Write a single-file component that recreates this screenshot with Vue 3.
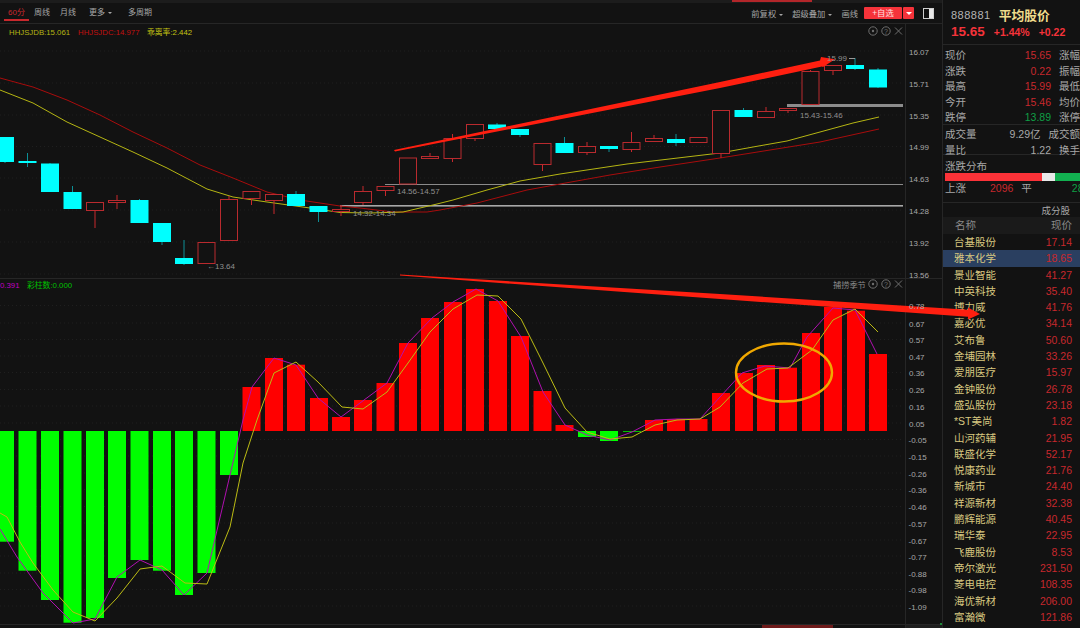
<template>
  <div class="app">
    <div class="main">
      <div class="top-strip"><i></i></div>
      <div class="toolbar">
        <div class="periods">
          <span class="tab active">60分</span>
          <span class="tab">周线</span>
          <span class="tab">月线</span>
          <span class="tab more">更多<i class="caret"></i></span>
          <span class="tab multi">多周期</span>
        </div>
        <div class="tools">
          <span class="tool">前复权<i class="caret"></i></span>
          <span class="tool">超级叠加<i class="caret"></i></span>
          <span class="tool">画线</span>
          <div class="add-group">
            <button class="btn-add">+自选</button>
            <button class="btn-drop"><i class="caret-white"></i></button>
          </div>
          <div class="layout-icon"><span></span></div>
        </div>
      </div>

      <svg class="chart" width="942" height="604" viewBox="0 24 942 604">
        <g class="grid">
          <line v-for="y in priceTicks" :key="'g' + y.label" x1="0" x2="904" :y1="y.y" :y2="y.y" />
          <line v-for="y in subTicks" :key="'s' + y.label" x1="0" x2="904" :y1="y.y" :y2="y.y" />
        </g>

        <line x1="905.5" y1="24" x2="905.5" y2="628" stroke="#262626" />
        <line x1="0" y1="278.5" x2="942" y2="278.5" stroke="#262626" />
        <line x1="0" y1="624.5" x2="942" y2="624.5" stroke="#262626" />

        <!-- support lines -->
        <rect x="787" y="104" width="116" height="3" fill="#8c8c8c" />
        <rect x="385" y="184" width="518" height="1" fill="#8a8a8a" />
        <rect x="340" y="205" width="563" height="1.6" fill="#a8a8a8" />

        <polyline class="ma" stroke="#a80c0c" :points="maRed" />
        <polyline class="ma" stroke="#b5b512" :points="maYellow" />

        <g v-for="c in candles" :key="c.x">
          <line :x1="c.x" :x2="c.x" :y1="c.hi" :y2="c.lo" :stroke="c.up ? '#c8282d' : '#0c8f96'" stroke-width="1" />
          <rect v-if="c.up" :x="c.x - 8.5" :y="c.top" width="17" :height="c.bot - c.top" fill="#121212" stroke="#b92a2e" stroke-width="1" />
          <rect v-else :x="c.x - 9" :y="c.top" width="18" :height="c.bot - c.top" fill="#00ffff" />
        </g>

        <rect v-for="b in bars" :key="b.x" :x="b.x - 9" :y="b.y" width="18" :height="b.h" :fill="b.up ? '#ff0000' : '#00ff00'" />
        <line x1="623" x2="641" y1="431.5" y2="431.5" stroke="#00c000" />

        <polyline class="sub" stroke="#b010b0" :points="subPurple" />
        <polyline class="sub" stroke="#bcbc14" :points="subYellow" />

        <ellipse cx="784" cy="372.5" rx="48" ry="29" fill="none" stroke="#f0a800" stroke-width="2.4" />

        <polygon fill="#ff1f10" points="394,150 720,82 820,60.5 821,57 835,59.3 823,67 822,66.5 720,88 395,151.5" />
        <polygon fill="#ff1f10" points="400,274.6 720,294 968,309.7 968,307.5 980,314 968,319.5 968,316.7 720,299 400,275.6" />

        <g class="note">
          <text x="827" y="61">15.99</text>
          <line x1="849" y1="58.5" x2="855" y2="58.5" stroke="#999" />
          <text x="800" y="118">15.43-15.46</text>
          <text x="397" y="194">14.56-14.57</text>
          <text x="353" y="216">14.32-14.34</text>
          <text x="207" y="269">←13.64</text>
        </g>

        <g class="legend">
          <text x="9" y="34.5" fill="#b5b512">HHJSJDB:15.061</text>
          <text x="78" y="34.5" fill="#c01010">HHJSJDC:14.977</text>
          <text x="147" y="34.5" fill="#c4c412">乖离率:2.442</text>
          <text x="0" y="287.5" fill="#c000c0">0.391</text>
          <text x="27" y="287.5" fill="#00c000">彩柱数:0.000</text>
          <text x="833" y="287.5" fill="#8a8a8a" class="sys-name">捕捞季节</text>
        </g>

        <g v-for="y in [31, 284]" :key="'i' + y" class="panel-icons">
          <circle cx="873" :cy="y" r="4.2" />
          <circle cx="873" :cy="y" r="1.2" class="dot" />
          <circle cx="886" :cy="y" r="4.2" />
          <text x="886" :y="y + 2.5" text-anchor="middle">?</text>
          <path :d="`M895 ${y - 3.5}L902 ${y + 3.5}M902 ${y - 3.5}L895 ${y + 3.5}`" />
        </g>

        <g class="axis">
          <text v-for="t in priceTicks" :key="t.label" x="909" :y="t.y + 3.5">{{ t.label }}</text>
          <text v-for="t in subTicks" :key="t.label" :x="t.label[0] === '-' ? 908.5 : 909" :y="t.y + 3.5">{{ t.label }}</text>
        </g>

        <rect x="762" y="625" width="71" height="3" fill="#6e1a1a" />
        <rect x="906" y="625" width="36" height="3" fill="#1e1e1e" />
        <rect x="940" y="623" width="2" height="2" fill="#1f8a3a" />
      </svg>
    </div>

    <aside class="side">
      <div class="stock-head">
        <div class="title"><span class="code">888881</span><span class="name">平均股价</span></div>
        <div class="price-line"><b>15.65</b><span>+1.44%</span><span>+0.22</span></div>
      </div>

      <div class="stats first">
        <div v-for="r in statsA" :key="r.a" class="stat">
          <span class="k">{{ r.a }}</span><span class="v" :class="r.c">{{ r.v }}</span><span class="k2">{{ r.b }}</span>
        </div>
      </div>
      <div class="stats second">
        <div v-for="r in statsB" :key="r.a" class="stat">
          <span class="k">{{ r.a }}</span><span class="v" :class="r.c">{{ r.v }}</span><span class="k2">{{ r.b }}</span>
        </div>
      </div>

      <div class="dist">
        <div class="dist-title">涨跌分布</div>
        <div class="dist-bar"><i class="r"></i><i class="w"></i><i class="g"></i></div>
        <div class="dist-nums">
          <span class="k">上涨</span><span class="n-up">2096</span><span class="k flat">平</span><span class="n-down">28</span>
        </div>
      </div>

      <div class="list-title">成分股</div>
      <div class="list-head"><span>名称</span><span>现价</span></div>
      <div class="list">
        <div v-for="(s, i) in stocks" :key="s[0]" class="row" :class="{ sel: i === 1 }">
          <span class="s-name">{{ s[0] }}</span><span class="s-price">{{ s[1] }}</span>
        </div>
      </div>
    </aside>
  </div>
</template>

<script setup>
const pts = (list) => list.map((p) => p.join(',')).join(' ')

// x, top, bottom, high, low, up
const raw = [
  [5, 137, 162, 137, 163, 0], [27.5, 161, 163, 153, 167, 0], [50, 163.5, 192, 163, 192, 0],
  [72.5, 192, 209, 186, 209, 0], [95, 202.5, 210.5, 202, 228, 1], [117, 200.5, 202.5, 195, 209, 1],
  [139.5, 200, 223, 199, 223, 0], [162, 223, 242, 223, 245, 0], [184, 258, 264, 240, 265, 0],
  [206.5, 242.5, 263.5, 242, 264, 1], [229, 199.5, 240.5, 196, 241, 1], [251.5, 191.5, 198.5, 191, 205, 1],
  [274, 194.5, 200.5, 194, 214, 1], [296, 194, 206, 191, 206, 0], [318.5, 206, 212, 206, 222, 0],
  [341, 209.5, 211.5, 205, 216, 1], [363, 191.5, 202.5, 186, 205, 1], [385.5, 186.5, 190.5, 186, 196, 1],
  [408, 158, 184, 158, 184, 1], [430, 156.5, 158.5, 153, 159, 1], [452.5, 138.5, 158.5, 134, 162, 1],
  [475, 124.5, 138.5, 124, 141, 1], [497, 124.5, 129, 123, 131, 0], [520, 129, 135, 129, 137, 0],
  [542.5, 143.5, 164.5, 143, 171, 1], [564.5, 143, 153, 137, 153, 0], [587, 146.5, 152.5, 142, 155, 1],
  [609, 146, 149, 146, 152, 0], [631.5, 142.5, 149.5, 132, 152, 1], [654, 138.5, 141.5, 135, 142, 1],
  [676, 139, 143, 134, 146, 0], [698.5, 137.5, 142.5, 137, 143, 1], [721, 110.5, 153.5, 110, 158, 1],
  [743.5, 110, 117, 108, 117, 0], [766, 111.5, 117.5, 107, 118, 1], [788, 108.5, 110.5, 108, 113, 1],
  [810.5, 71.5, 104.5, 70, 105, 1], [833, 65.5, 70.5, 65, 75, 1], [855, 65, 69, 58, 70, 0],
  [878, 69.5, 87.5, 68, 88, 0]
]
const candles = raw.map(([x, top, bot, hi, lo, up]) => ({ x, top, bot, hi, lo, up: !!up }))

const maYellow = pts([[0, 90], [33, 103], [67, 122], [100, 137], [133, 152], [167, 168], [207, 189], [233, 197], [267, 202], [317, 209], [340, 212.5], [370, 213], [403, 212], [437, 204], [453, 200], [487, 190], [520, 181], [560, 174], [627, 164], [720, 153], [753, 147], [787, 141], [820, 132], [853, 123], [879, 117]])
const maRed = pts([[0, 78], [33, 87], [67, 100], [100, 115], [133, 132], [167, 148], [200, 165], [233, 178], [267, 192], [300, 200], [340, 206], [360, 208], [393, 212], [427, 212], [440, 210], [477, 203], [527, 190], [560, 184], [610, 175], [660, 167], [720, 158], [770, 150], [820, 142], [879, 129]])

const base = 431
const downs = [[5, 541.7], [27.5, 570.7], [50, 600], [72.5, 622.7], [95, 618], [117, 578], [139.5, 560], [162, 570.7], [184, 595], [206.5, 573], [229, 475], [587, 437], [609, 441]]
const ups = [[251.5, 387], [274, 358], [296, 364.7], [319, 398], [341, 417], [363, 400], [385.5, 383], [408, 343], [430, 318], [453, 302], [475, 289], [498, 301], [520, 336], [542.5, 391], [564.5, 425], [654, 420], [676, 419], [698.5, 419], [721, 393], [744, 373], [766, 365], [788, 367.7], [811, 333], [833, 307], [856, 310.7], [878, 354]]
const bars = [
  ...downs.map(([x, y]) => ({ x, y: base, h: y - base, up: false })),
  ...ups.map(([x, y]) => ({ x, y, h: base - y, up: true }))
]

const subPurple = pts([[0, 529], [17, 557], [43, 593], [73, 623], [95, 619], [117, 577], [140, 560], [162, 570], [184, 595], [207, 573], [230, 475], [243, 420], [252, 387], [274, 358], [296, 365], [318, 398], [341, 417], [360, 403], [387, 383], [408, 343], [432, 318], [453, 302], [476, 289], [498, 301], [521, 337], [543, 392], [565, 425], [587, 435], [610, 440], [632, 432], [655, 420], [677, 419], [700, 419], [720, 397], [742, 373], [765, 366], [790, 368], [807, 337], [833, 308], [855, 310], [877, 354]])
const subYellow = pts([[0, 513], [7, 517], [20, 542], [33, 563], [53, 590], [73, 612], [95, 621], [117, 598], [140, 569], [162, 566], [185, 583], [207, 584], [230, 527], [243, 463], [257, 420], [274, 373], [296, 362], [318, 382], [342, 407], [363, 409], [387, 392], [408, 363], [430, 332], [453, 309], [477, 295], [498, 296], [521, 319], [543, 363], [565, 408], [587, 432], [610, 439], [632, 437], [655, 425], [677, 420], [700, 419], [720, 407], [743, 383], [767, 369], [788, 368], [812, 350], [833, 320], [855, 309], [878, 332]])

const priceTicks = [
  { label: '16.07', y: 51 }, { label: '15.71', y: 83 }, { label: '15.35', y: 115 }, { label: '14.99', y: 146.5 },
  { label: '14.63', y: 178 }, { label: '14.28', y: 210 }, { label: '13.92', y: 242 }, { label: '13.56', y: 274 }
]
const subTicks = [
  ['0.78', 305.5], ['0.67', 323], ['0.57', 339.5], ['0.47', 356], ['0.36', 372.5], ['0.26', 389.5], ['0.16', 406], ['0.05', 423],
  ['-0.05', 439.5], ['-0.15', 456], ['-0.26', 473], ['-0.36', 489.5], ['-0.46', 506.5], ['-0.57', 523], ['-0.67', 540], ['-0.77', 556], ['-0.88', 573], ['-0.98', 589.5], ['-1.09', 606]
].map(([label, y]) => ({ label, y }))

const statsA = [
  { a: '现价', v: '15.65', b: '涨幅', c: 'red' },
  { a: '涨跌', v: '0.22', b: '振幅', c: 'red' },
  { a: '最高', v: '15.99', b: '最低', c: 'red' },
  { a: '今开', v: '15.46', b: '均价', c: 'red' },
  { a: '跌停', v: '13.89', b: '涨停', c: 'green' }
]
const statsB = [
  { a: '成交量', v: '9.29亿', b: '成交额', c: '' },
  { a: '量比', v: '1.22', b: '换手', c: '' }
]

const stocks = [
  ['台基股份', '17.14'], ['雅本化学', '18.65'], ['景业智能', '41.27'], ['中英科技', '35.40'],
  ['博力威', '41.76'], ['嘉必优', '34.14'], ['艾布鲁', '50.60'], ['金埔园林', '33.26'],
  ['爱朋医疗', '15.97'], ['金钟股份', '26.78'], ['盛弘股份', '23.18'], ['*ST美尚', '1.82'],
  ['山河药辅', '21.95'], ['联盛化学', '52.17'], ['悦康药业', '21.76'], ['新城市', '24.40'],
  ['祥源新材', '32.38'], ['鹏辉能源', '40.45'], ['瑞华泰', '22.95'], ['飞鹿股份', '8.53'],
  ['帝尔激光', '231.50'], ['菱电电控', '108.35'], ['海优新材', '206.00'], ['富瀚微', '121.86']
]
</script>

<style>
html, body {
  margin: 0;
  background: #121212;
}
</style>

<style scoped>
.app {
  width: 1080px;
  height: 628px;
  display: flex;
  overflow: hidden;
  background: #121212;
  font-family: "Liberation Sans", "Noto Sans CJK SC", sans-serif;
  color: #a8a8a8;
  font-size: 10.5px;
}

/* the second arrow runs over the stock list, so the chart sits above the sidebar */
.main {
  width: 942px;
  flex: none;
  display: flex;
  flex-direction: column;
  position: relative;
  z-index: 1;
}

.top-strip {
  height: 3px;
  background: #1c1c1c;
  padding-left: 732px;
}

.top-strip i {
  display: block;
  width: 80px;
  height: 1.5px;
  background: #b3262a;
}

.toolbar {
  height: 21px;
  box-sizing: border-box;
  border-bottom: 1px solid #262626;
  display: flex;
  justify-content: space-between;
  align-items: center;
  padding: 0 8px 0 4px;
  font-size: 8px;
  color: #a6a6a6;
}

.periods {
  display: flex;
  height: 100%;
  align-items: center;
}

.tab {
  height: 100%;
  box-sizing: border-box;
  line-height: 20px;
  padding: 0 4px;
  margin-right: 2px;
  white-space: nowrap;
}

.tab.active {
  color: #c8282d;
  border-bottom: 2px solid #c8282d;
  height: 18px;
  align-self: flex-start;
  margin-right: 1px;
}

.tab.more {
  margin-left: 3px;
  margin-right: 8px;
}

.caret {
  display: inline-block;
  margin-left: 3px;
  vertical-align: middle;
  border-left: 2.5px solid transparent;
  border-right: 2.5px solid transparent;
  border-top: 2px solid #a6a6a6;
}

.tools {
  display: flex;
  align-items: center;
  gap: 9px;
  font-size: 8.3px;
}

.tool {
  white-space: nowrap;
}

.add-group {
  display: flex;
  gap: 1px;
  margin-left: -3px;
}

.btn-add,
.btn-drop {
  border: none;
  padding: 0;
  height: 12px;
  background: #f5333a;
  color: #ffe0e0;
  font: inherit;
  line-height: 12px;
  border-radius: 1px;
}

.btn-add {
  width: 38px;
}

.btn-drop {
  width: 11px;
  display: flex;
  align-items: center;
  justify-content: center;
}

.caret-white {
  border-left: 3px solid transparent;
  border-right: 3px solid transparent;
  border-top: 3px solid #fff;
}

.layout-icon {
  width: 11px;
  height: 11px;
  box-sizing: border-box;
  border: 1px solid #d0d0d0;
  display: flex;
  justify-content: flex-end;
}

.layout-icon span {
  width: 4px;
  background: #e8e8e8;
}

.chart {
  display: block;
  flex: none;
  overflow: visible;
}

.grid line {
  stroke: #1f1f1f;
  stroke-dasharray: 1 3;
}

.ma,
.sub {
  fill: none;
  stroke-width: 1;
}

.note text {
  font-size: 8px;
  fill: #8f8f8f;
}

.legend text {
  font-size: 7.8px;
}

.legend .sys-name {
  font-size: 8.2px;
}

.axis text {
  font-size: 8px;
  fill: #a8a8a8;
}

.panel-icons circle {
  fill: none;
  stroke: #6e6e6e;
}

.panel-icons .dot {
  fill: #6e6e6e;
  stroke: none;
}

.panel-icons path {
  fill: none;
  stroke: #6e6e6e;
}

.panel-icons text {
  font-size: 7px;
  fill: #6e6e6e;
}

.side {
  flex: 1;
  min-width: 0;
  border-left: 1px solid #262626;
  overflow: hidden;
}

.stock-head {
  height: 45px;
  box-sizing: border-box;
  border-bottom: 1px solid #262626;
  padding: 7px 0 0 8px;
  white-space: nowrap;
}

.title {
  display: flex;
  align-items: center;
  gap: 8px;
  height: 15px;
}

.code {
  font-size: 11px;
  letter-spacing: 0.5px;
  color: #b5b5b5;
}

.name {
  font-size: 12.8px;
  font-weight: 700;
  color: #f0dc8c;
}

.price-line {
  display: flex;
  align-items: baseline;
  gap: 9px;
  margin-top: 2px;
  color: #f5333a;
  font-size: 10.5px;
  font-weight: 700;
}

.price-line b {
  font-size: 13.5px;
}

.stats {
  padding: 3px 0 0 2px;
  box-sizing: border-box;
  border-bottom: 1px solid #262626;
}

.stats.first {
  height: 80px;
}

.stats.second {
  height: 30px;
  padding-top: 2px;
}

.stat {
  display: flex;
  height: 15.6px;
  line-height: 15.6px;
  white-space: nowrap;
}

.k {
  width: 40px;
  color: #a8a8a8;
}

.v {
  width: 67px;
  margin-left: -40px;
  padding-left: 40px;
  box-sizing: content-box;
  text-align: right;
  color: #a8a8a8;
}

.v.red {
  color: #c8282d;
}

.v.green {
  color: #0f9f45;
}

.k2 {
  margin-left: 8px;
}

.dist {
  height: 48px;
  box-sizing: border-box;
  border-bottom: 1px solid #262626;
  padding: 5px 0 0 2px;
}

.dist-title {
  height: 13px;
  line-height: 13px;
}

.dist-bar {
  display: flex;
  height: 8px;
}

.dist-bar i {
  display: block;
}

.dist-bar .r {
  width: 97px;
  background: #fb3238;
}

.dist-bar .w {
  width: 13px;
  background: #e8e8e8;
}

.dist-bar .g {
  flex: 1;
  background: #12b050;
}

.dist-nums {
  display: flex;
  height: 14px;
  line-height: 14px;
  white-space: nowrap;
}

.dist-nums .k {
  width: auto;
}

.n-up {
  margin-left: 24px;
  color: #c8282d;
}

.flat {
  margin-left: 8px;
}

.n-down {
  margin-left: 40px;
  color: #0f9f45;
}

.list-title {
  height: 14px;
  line-height: 15px;
  padding-right: 10px;
  text-align: right;
  font-size: 9.5px;
}

.list-head {
  height: 17px;
  line-height: 17px;
  display: flex;
  justify-content: space-between;
  padding: 0 8px 0 12px;
  background: #1a1a1a;
  color: #8a8a8a;
}

.row {
  height: 16.3px;
  line-height: 16.3px;
  display: flex;
  justify-content: space-between;
  padding: 0 8px 0 11px;
}

.row.sel {
  background: #2a3f60;
}

.s-name {
  color: #d8c880;
}

.s-price {
  color: #c8282d;
}
</style>
